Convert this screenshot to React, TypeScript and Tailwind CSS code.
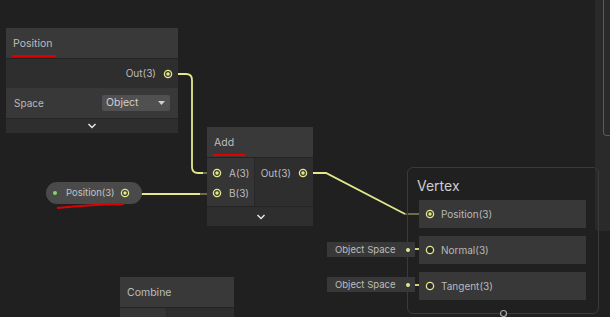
import type { ReactNode } from 'react'

const WIRE = '#e4e88c'
const DIM = '#77764f'

function Port({ filled = true, dim = false }: { filled?: boolean; dim?: boolean }) {
  return (
    <svg width="10" height="10" viewBox="0 0 10 10" className="shrink-0">
      <circle cx="5" cy="5" r="3.6" fill={dim ? '#2a2a2a' : '#3c3c2c'} stroke={WIRE} strokeWidth="1.3" />
      {filled && <circle cx="5" cy="5" r="1.7" fill={WIRE} />}
    </svg>
  )
}

function Chevron() {
  return (
    <svg width="10" height="6" viewBox="0 0 10 6">
      <path d="M1.5 1 L5 4.5 L8.5 1" fill="none" stroke="#e6e6e6" strokeWidth="1.5" />
    </svg>
  )
}

function Header({ title, underline }: { title: string; underline?: number }) {
  return (
    <div className="relative h-[31px] bg-[#393939] flex items-center px-[7px] pt-[2px] border-b border-[#242424]">
      <span className="text-[10.5px] text-[#bdbdbd]">{title}</span>
      {underline && (
        <div className="absolute left-[6px] top-[27px] h-[2px] bg-[#e00000]" style={{ width: underline }} />
      )}
    </div>
  )
}

function Slot({ children }: { children: ReactNode }) {
  return (
    <div className="h-[28px] bg-[#383838] flex items-center gap-[6px] pl-[6px] text-[10px] text-[#b8b8b8]">
      {children}
    </div>
  )
}

export default function App() {
  return (
    <div
      className="relative w-[610px] h-[317px] overflow-hidden bg-[#202020]"
      style={{ fontFamily: 'Inter, "Liberation Sans", sans-serif' }}
    >
      {/* wires */}
      <svg className="absolute inset-0" width="610" height="317" viewBox="0 0 610 317">
        <path d="M172 74 H186 Q192 74 192 80 V167 Q192 173 198 173 H203" fill="none" stroke={WIRE} strokeWidth="1.8" />
        <path d="M203 173 H213" fill="none" stroke={DIM} strokeWidth="1.8" />
        <path d="M130 194 H200" fill="none" stroke={WIRE} strokeWidth="1.8" />
        <path d="M200 194 H213" fill="none" stroke={DIM} strokeWidth="1.8" />
        <path d="M307 173 H326 L405 214" fill="none" stroke={WIRE} strokeWidth="1.8" />
        <path d="M405 214 H425" fill="none" stroke={DIM} strokeWidth="1.8" />
        <path d="M409 249 H413" fill="none" stroke={DIM} strokeWidth="1.8" />
        <path d="M413 249 H421" fill="none" stroke={WIRE} strokeWidth="1.8" />
        <path d="M421 249 H426" fill="none" stroke={DIM} strokeWidth="1.8" />
        <path d="M409 285 H413" fill="none" stroke={DIM} strokeWidth="1.8" />
        <path d="M413 285 H421" fill="none" stroke={WIRE} strokeWidth="1.8" />
        <path d="M421 285 H426" fill="none" stroke={DIM} strokeWidth="1.8" />
      </svg>

      {/* right side panel */}
      <div className="absolute left-[595px] top-0 w-[20px] h-[231px] bg-[#2a2a2a] rounded-bl-[4px]" />
      <div className="absolute left-[603px] top-[-10px] w-[20px] h-[146px] border-l border-b border-[#5a5a5a] rounded-bl-[4px]" />

      {/* Position node */}
      <div className="absolute left-[6px] top-[28px] w-[172px] flex flex-col">
        <Header title="Position" underline={43} />
        <div className="h-[29px] bg-[#2e2e2e] flex items-center justify-end gap-[7px] pr-[5px] text-[10px] text-[#bdbdbd]">
          <span>Out(3)</span>
          <Port />
        </div>
        <div className="h-[31px] bg-[#383838] flex items-center justify-between pl-[8px] pr-[8px] border-b border-[#242424]">
          <span className="text-[10px] text-[#b8b8b8]">Space</span>
          <div className="w-[68px] h-[16px] bg-[#505050] rounded-[2px] flex items-center justify-between pl-[4px] pr-[5px]">
            <span className="text-[10.5px] text-[#cfcfcf]">Object</span>
            <svg width="7" height="4" viewBox="0 0 7 4">
              <path d="M0 0 H7 L3.5 4 Z" fill="#d0d0d0" />
            </svg>
          </div>
        </div>
        <div className="h-[14px] bg-[#2e2e2e] flex items-center justify-center pr-[1px]">
          <Chevron />
        </div>
      </div>

      {/* Add node */}
      <div className="absolute left-[207px] top-[127px] w-[106px] flex flex-col">
        <Header title="Add" underline={32} />
        <div className="flex h-[49px] border-b border-[#242424]">
          <div className="w-[48px] bg-[#353535] flex flex-col pt-[5px] border-r border-[#282828]">
            {['A(3)', 'B(3)'].map((l) => (
              <div key={l} className="h-[20px] flex items-center gap-[7px] pl-[5px] text-[10px] text-[#bdbdbd]">
                <Port />
                <span>{l}</span>
              </div>
            ))}
          </div>
          <div className="flex-1 bg-[#2e2e2e] pt-[5px]">
            <div className="h-[20px] flex items-center justify-end gap-[7px] pr-[5px] text-[10px] text-[#bdbdbd]">
              <span>Out(3)</span>
              <Port />
            </div>
          </div>
        </div>
        <div className="h-[19px] bg-[#2e2e2e] flex items-center justify-center pl-[2px]">
          <Chevron />
        </div>
      </div>

      {/* Position(3) property */}
      <div className="absolute left-[46px] top-[182px] w-[96px] h-[22px] rounded-full bg-[#4a4a4a] flex items-center pl-[7px] pr-[12px]">
        <div className="w-[4px] h-[4px] shrink-0 rounded-full bg-[#86d46e]" />
        <span className="ml-[9px] text-[9.5px] text-[#c2c2c2]">Position(3)</span>
        <div className="ml-auto">
          <Port />
        </div>
      </div>
      <svg className="absolute left-[56px] top-[202px]" width="70" height="8" viewBox="0 0 70 8">
        <path d="M1 6 Q20 4 40 3 T68 2" fill="none" stroke="#e00000" strokeWidth="1.8" />
      </svg>

      {/* Vertex context */}
      <div className="absolute left-[407px] top-[167px] w-[192px] h-[147px] border border-[#3a3a3a] rounded-[6px] flex flex-col">
        <div className="h-[31px] flex items-center pl-[9px] pt-[4px]">
          <span className="text-[14px] text-[#cdcdcd]">Vertex</span>
        </div>
        <div className="flex flex-col gap-[8px] ml-[11px] mt-[1px] w-[167px]">
          <Slot>
            <Port />
            <span>Position(3)</span>
          </Slot>
          <Slot>
            <Port filled={false} dim />
            <span>Normal(3)</span>
          </Slot>
          <Slot>
            <Port filled={false} dim />
            <span>Tangent(3)</span>
          </Slot>
        </div>
      </div>
      <svg className="absolute left-[499px] top-[309px]" width="9" height="9" viewBox="0 0 9 9">
        <circle cx="4.5" cy="4.5" r="3" fill="#202020" stroke="#a8a8a8" strokeWidth="1.2" />
      </svg>

      {/* Object Space inputs */}
      {[242, 277].map((t) => (
        <div
          key={t}
          className="absolute left-[327px] w-[88px] h-[15px] bg-[#383838] flex items-center pl-[8px] pr-[5px] pt-[1px]"
          style={{ top: t }}
        >
          <span className="text-[9.5px] text-[#bdbdbd]">Object Space</span>
          <div className="ml-auto w-[4px] h-[4px] rounded-full bg-[#e4e88c]" />
        </div>
      ))}

      {/* Combine node */}
      <div className="absolute left-[120px] top-[277px] w-[114px] flex flex-col">
        <Header title="Combine" />
        <div className="flex h-[20px]">
          <div className="w-[47px] bg-[#353535] border-r border-[#282828]" />
          <div className="flex-1 bg-[#2e2e2e]" />
        </div>
      </div>
    </div>
  )
}
